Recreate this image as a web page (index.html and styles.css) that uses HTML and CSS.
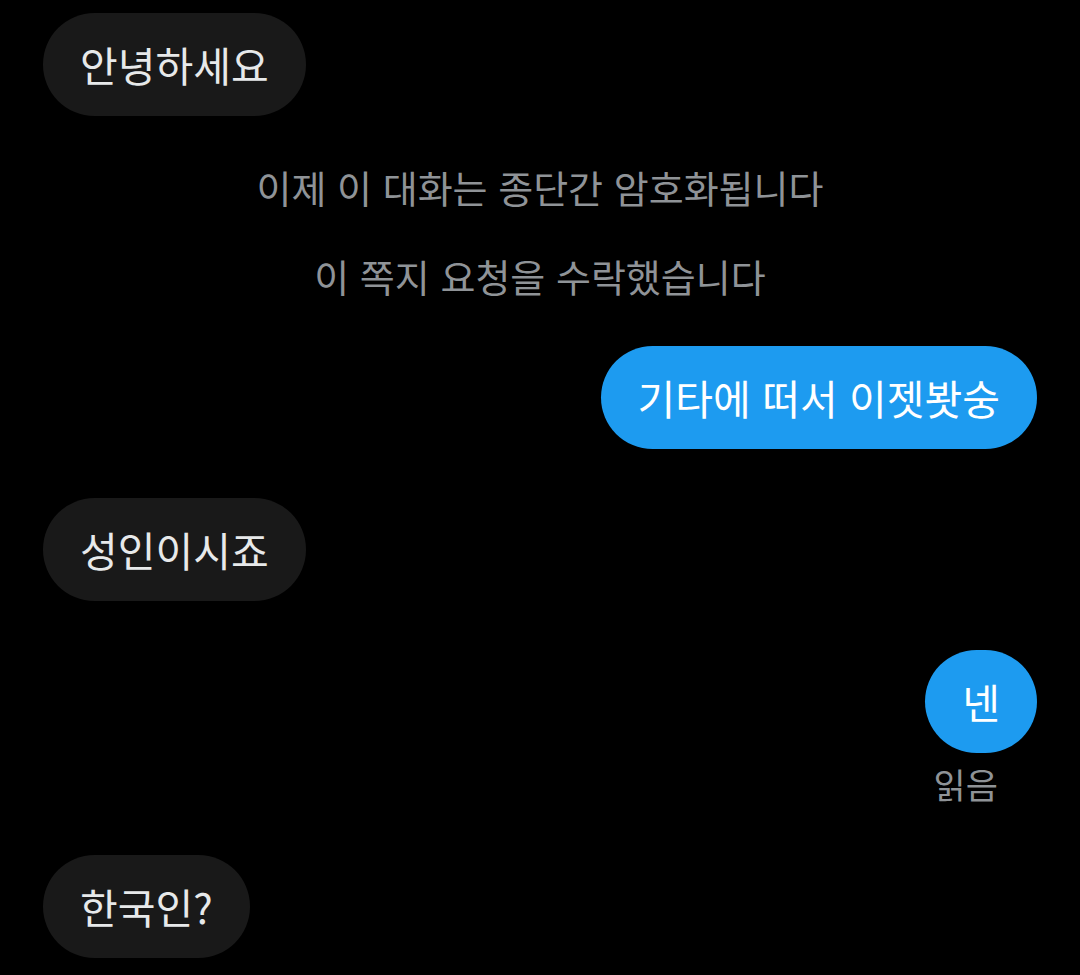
FILE: index.html
```html
<!DOCTYPE html>
<html lang="ko">
<head>
    <meta charset="UTF-8">
    <meta name="viewport" content="width=device-width, initial-scale=1.0">
    <title>쪽지</title>
    <link rel="stylesheet" href="styles.css">
</head>
<body>

<div id="chat">
    <div class="row">
        <div class="bubble received">안녕하세요</div>
    </div>

    <div class="notice first">이제 이 대화는 종단간 암호화됩니다</div>
    <div class="notice second">이 쪽지 요청을 수락했습니다</div>

    <div class="row sent-row gap-blue">
        <div class="bubble sent">기타에 떠서 이젯봣숭</div>
    </div>

    <div class="row gap-std">
        <div class="bubble received">성인이시죠</div>
    </div>

    <div class="row sent-row gap-std">
        <div class="bubble sent">넨</div>
    </div>
    <div class="readMark">읽음</div>

    <div class="row gap-last">
        <div class="bubble received">한국인?</div>
    </div>
</div>

</body>
</html>
```

FILE: styles.css
```css
body {
    margin: 0;
    background: #000;
    font-family: "Noto Sans CJK KR", "Noto Sans", sans-serif;
    height: 100vh;
    overflow: hidden;
}

#chat {
    display: flex;
    flex-direction: column;
    padding: 13px 43px 0 43px;
}

.row {
    display: flex;
}

.sent-row {
    justify-content: flex-end;
}

.bubble {
    font-size: 41px;
    line-height: 51px;
    padding: 26px 37px;
    border-radius: 52px;
    white-space: nowrap;
}

.received {
    background: #191919;
    color: #e7e9ea;
}

.sent {
    background: #1d9bf0;
    color: #fff;
}

.notice {
    text-align: center;
    color: #8f9397;
    font-size: 38px;
    line-height: 50px;
}

.notice.first {
    margin-top: 46px;
}

.notice.second {
    margin-top: 39px;
}

.gap-blue {
    margin-top: 45px;
}

.gap-std {
    margin-top: 49px;
}

.readMark {
    align-self: flex-end;
    margin-top: 11px;
    margin-right: 39px;
    color: #8f9397;
    font-size: 35px;
    line-height: 40px;
}

.gap-last {
    margin-top: 51px;
}
```
